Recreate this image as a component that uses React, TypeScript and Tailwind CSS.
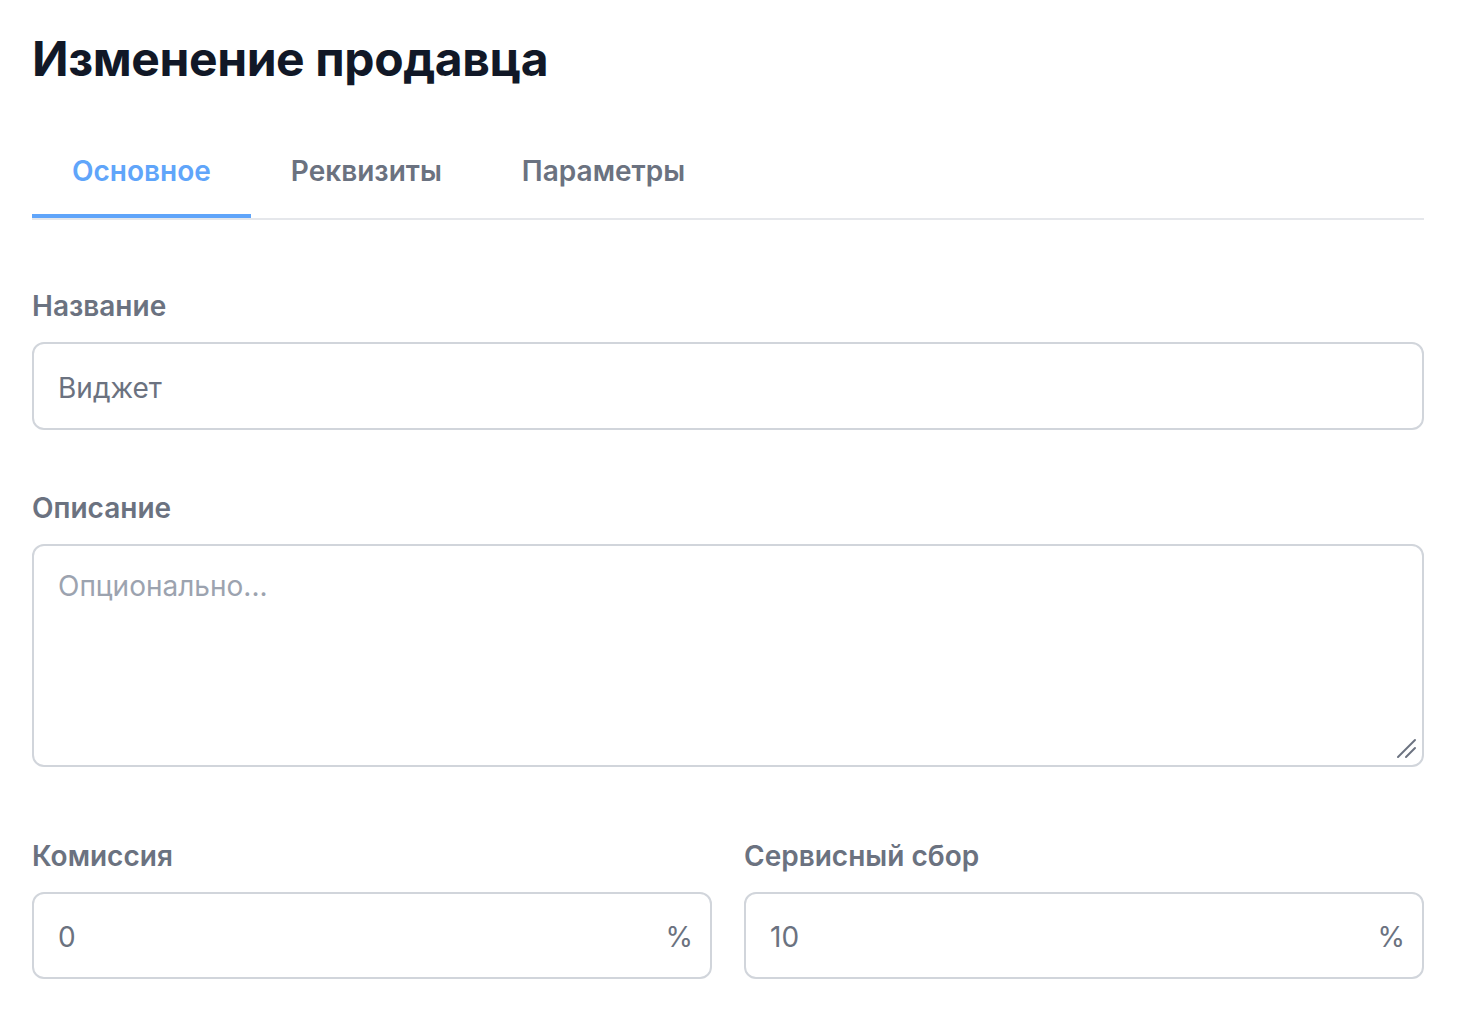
import React from "react";

const font = { fontFamily: "Inter, 'Noto Sans', sans-serif" };

export default function App() {
  return (
    <div className="min-h-screen bg-white pl-8 pb-10" style={font}>
      <div className="w-[1392px]">
        <h1 className="mt-[27px] text-[48px] font-bold leading-[64px] tracking-[-0.4px] text-[#111827]">
          Изменение продавца
        </h1>

        <nav className="mt-[60px] flex border-b-2 border-[#e5e7eb]">
          <button className="border-b-4 border-[#60a5fa] px-10 pb-[23px] text-[28px] font-semibold leading-[40px] text-[#60a5fa]">
            Основное
          </button>
          <button className="border-b-4 border-transparent px-10 pb-[23px] text-[28px] font-semibold leading-[40px] text-[#6b7280]">
            Реквизиты
          </button>
          <button className="border-b-4 border-transparent px-10 pb-[23px] text-[28px] font-semibold leading-[40px] text-[#6b7280]">
            Параметры
          </button>
        </nav>

        <div className="mt-[66px]">
          <label className="block text-[28px] font-semibold leading-[40px] text-[#6b7280]">Название</label>
          <div className="mt-4 flex h-[88px] items-center rounded-[12px] border-2 border-[#d1d5db] px-6 pt-[3px]">
            <span className="text-[28px] leading-[40px] text-[#6b7280]">Виджет</span>
          </div>
        </div>

        <div className="mt-[58px]">
          <label className="block text-[28px] font-semibold leading-[40px] text-[#6b7280]">Описание</label>
          <div className="relative mt-4">
            <textarea
              placeholder="Опционально..."
              className="block h-[223px] w-full resize-none rounded-[12px] border-2 border-[#d1d5db] px-6 pt-[20px] pb-4 text-[28px] leading-[40px] text-[#6b7280] placeholder:text-[#9ca3af] outline-none"
            />
            <svg
              className="pointer-events-none absolute bottom-[8px] right-[7px]"
              width="22"
              height="22"
              viewBox="0 0 22 22"
            >
              <line x1="3" y1="20" x2="20" y2="3" stroke="#6b7280" strokeWidth="2" strokeLinecap="round" />
              <line x1="11" y1="20" x2="20" y2="11" stroke="#6b7280" strokeWidth="2" strokeLinecap="round" />
            </svg>
          </div>
        </div>

        <div className="mt-[69px] grid grid-cols-2 gap-8">
          <div>
            <label className="block text-[28px] font-semibold leading-[40px] text-[#6b7280]">Комиссия</label>
            <div className="mt-[16px] flex h-[87px] items-center justify-between rounded-[12px] border-2 border-[#d1d5db] pl-6 pr-[17px] pt-[3px]">
              <span className="text-[28px] leading-[40px] text-[#6b7280]">0</span>
              <span className="text-[28px] leading-[40px] text-[#6b7280]">%</span>
            </div>
          </div>
          <div>
            <label className="block text-[28px] font-semibold leading-[40px] text-[#6b7280]">Сервисный сбор</label>
            <div className="mt-[16px] flex h-[87px] items-center justify-between rounded-[12px] border-2 border-[#d1d5db] pl-6 pr-[17px] pt-[3px]">
              <span className="text-[28px] leading-[40px] text-[#6b7280]">10</span>
              <span className="text-[28px] leading-[40px] text-[#6b7280]">%</span>
            </div>
          </div>
        </div>
      </div>
    </div>
  );
}
